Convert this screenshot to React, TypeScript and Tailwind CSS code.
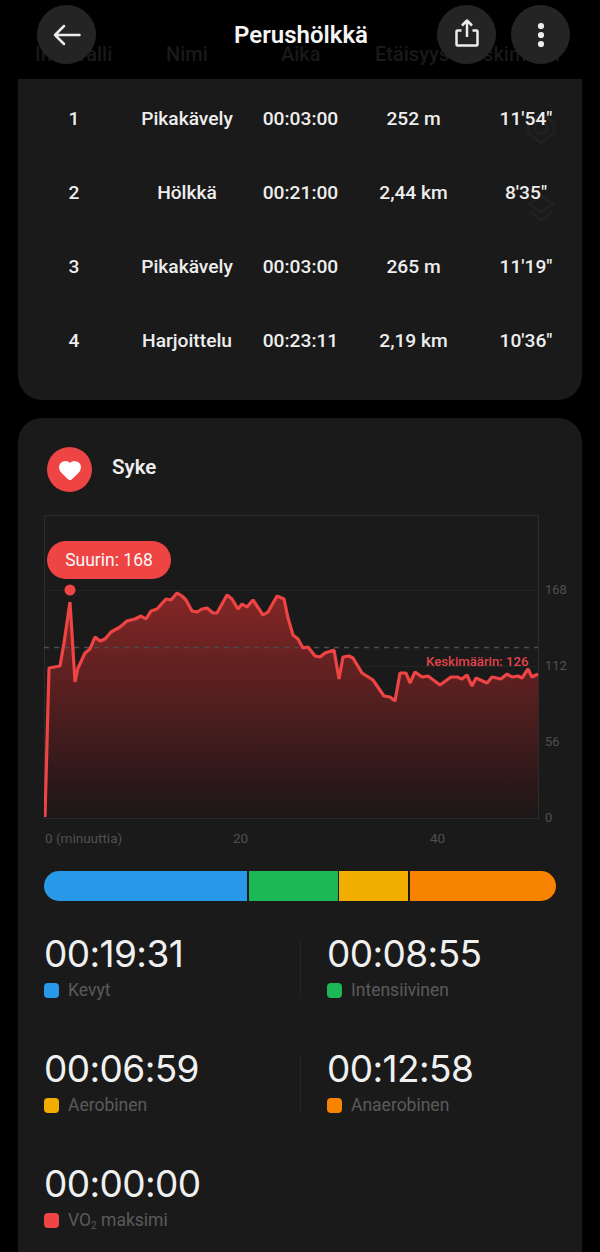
import React from 'react';
import { Heart } from 'lucide-react';

const rows = [
  { n: '1', name: 'Pikakävely', time: '00:03:00', dist: '252 m', pace: `11'54"` },
  { n: '2', name: 'Hölkkä', time: '00:21:00', dist: '2,44 km', pace: `8'35"` },
  { n: '3', name: 'Pikakävely', time: '00:03:00', dist: '265 m', pace: `11'19"` },
  { n: '4', name: 'Harjoittelu', time: '00:23:11', dist: '2,19 km', pace: `10'36"` },
];

// heart rate trace, x/y read off the screenshot relative to the plot box (494 x 303)
const trace: [number, number][] = [
  [1, 302], [5, 153], [16, 151], [20, 128], [26, 87], [31, 167], [34, 153], [41, 138], [46, 134], [51, 122],
  [56, 126], [61, 124], [67, 117], [76, 112], [83, 106], [91, 104], [97, 101], [102, 104], [107, 96], [113, 94],
  [122, 84], [127, 85], [133, 78], [138, 81], [142, 85], [148, 96], [153, 97], [158, 94], [163, 93], [169, 98],
  [173, 98], [183, 80], [188, 84], [194, 94], [198, 89], [203, 92], [209, 85], [219, 100], [224, 97], [233, 81],
  [240, 84], [244, 103], [249, 120], [254, 124], [259, 133], [264, 132], [271, 141], [276, 142], [281, 138],
  [290, 135], [295, 164], [299, 142], [305, 141], [309, 143], [318, 158], [329, 165], [340, 181], [346, 182],
  [351, 186], [356, 158], [362, 158], [366, 168], [371, 157], [378, 162], [384, 161], [396, 170], [407, 162],
  [413, 162], [418, 164], [423, 160], [428, 171], [432, 163], [443, 168], [448, 162], [457, 164], [463, 159],
  [468, 162], [474, 161], [478, 163], [484, 154], [488, 162], [494, 159],
];

const linePoints = trace.map(([x, y]) => `${x},${y}`).join(' ');
const areaPoints = `${linePoints} 494,303 1,303`;

const zones = [
  { time: '00:19:31', label: 'Kevyt', color: 'bg-[#2899e8]' },
  { time: '00:08:55', label: 'Intensiivinen', color: 'bg-[#1cb858]' },
  { time: '00:06:59', label: 'Aerobinen', color: 'bg-[#f2ae00]' },
  { time: '00:12:58', label: 'Anaerobinen', color: 'bg-[#f88300]' },
];

const RoundButton: React.FC<{ children: React.ReactNode }> = ({ children }) => (
  <div className="flex h-[59px] w-[59px] items-center justify-center rounded-full bg-[#242424]">{children}</div>
);

const BackIcon = () => (
  <svg width="28" height="22" viewBox="0 0 28 22" fill="none" stroke="#ececec" strokeWidth="2.5" strokeLinecap="round" strokeLinejoin="round">
    <path d="M26.5 11H2M11 2L2 11L11 20" />
  </svg>
);

const ShareIcon = () => (
  <svg className="mb-[4px]" width="24" height="28" viewBox="0 0 24 28" fill="none" stroke="#ececec" strokeWidth="2.5" strokeLinejoin="round">
    <path d="M6.5 11.5H2.5A1 1 0 0 0 1.5 12.5V25.5A1 1 0 0 0 2.5 26.5H21.5A1 1 0 0 0 22.5 25.5V12.5A1 1 0 0 0 21.5 11.5H17.5" />
    <path d="M12 18V2M7 6.5L12 1.5L17 6.5" />
  </svg>
);

const DotsIcon = () => (
  <svg width="8" height="26" viewBox="0 0 8 26" fill="#ececec">
    <circle cx="4" cy="4" r="3.1" />
    <circle cx="4" cy="13" r="3.1" />
    <circle cx="4" cy="22" r="3.1" />
  </svg>
);

const ZoneCell: React.FC<{ time: string; label: React.ReactNode; color: string }> = ({ time, label, color }) => (
  <div>
    <div className="font-['Inter',sans-serif] text-[37px] leading-[28px] font-normal tracking-[-0.6px] text-[#f0f0f0]">{time}</div>
    <div className="mt-[15px] flex h-[15px] items-center gap-[9px]">
      <span className={`h-[15px] w-[15px] rounded-[4px] ${color}`} />
      <span className="text-[17.5px] leading-[15px] text-[#5a5a5a]">{label}</span>
    </div>
  </div>
);

const App: React.FC = () => {
  return (
    <div className="relative h-[1252px] w-[600px] overflow-hidden bg-black font-['Roboto',sans-serif] text-white">
      {/* top bar lies over the scrolled table header */}
      <div className="absolute top-[5px] left-[37px] z-10 flex w-[533px] items-center justify-between">
        <RoundButton>
          <BackIcon />
        </RoundButton>
        <div className="absolute left-[197px] text-[24px] leading-[24px] font-semibold text-[#f5f5f5]">Perushölkkä</div>
        <div className="flex gap-[15px]">
          <RoundButton>
            <ShareIcon />
          </RoundButton>
          <RoundButton>
            <DotsIcon />
          </RoundButton>
        </div>
      </div>

      {/* table header, almost hidden behind the bar */}
      <div className="flex h-[79px] items-end pb-[17px] pl-[35px] text-[20px] leading-[16px] font-medium whitespace-nowrap text-[#191919]">
        <span className="w-[131px]">Intervalli</span>
        <span className="w-[115px]">Nimi</span>
        <span className="w-[94px]">Aika</span>
        <span className="w-[85px]">Etäisyys</span>
        <span>Keskimääri</span>
      </div>

      <div className="relative mx-[18px] h-[321px] rounded-b-[24px] bg-[#1a1a1a] pt-[3px]">
        {/* faint tab icons showing through */}
        <svg className="absolute top-[32px] left-[507px]" width="32" height="34" viewBox="0 0 32 34" fill="none" stroke="#212121" strokeWidth="2.5">
          <path d="M16 2L29 12V22L16 32L3 22V12Z" />
          <circle cx="16" cy="17" r="6" />
        </svg>
        <svg className="absolute top-[115px] left-[509px]" width="28" height="28" viewBox="0 0 28 28" fill="none" stroke="#212121" strokeWidth="2.5">
          <path d="M2 10L14 2L26 10L14 18Z" />
          <path d="M2 17L14 26L26 17" />
        </svg>
        {rows.map((r) => (
          <div key={r.n} className="relative grid h-[74px] grid-cols-[112px_114px_113px_113px_1fr] items-center text-center text-[19.2px] font-medium text-[#eeeeee]">
            <span>{r.n}</span>
            <span className="whitespace-nowrap">{r.name}</span>
            <span>{r.time}</span>
            <span>{r.dist}</span>
            <span>{r.pace}</span>
          </div>
        ))}
      </div>

      <div className="mx-[18px] mt-[18px] rounded-[24px] bg-[#1a1a1a] pt-[29px] pl-[26px]">
        <div className="flex items-center gap-[20px] pl-[3px]">
          <div className="flex h-[45px] w-[45px] items-center justify-center rounded-full bg-[#ef4444]">
            <Heart size={24} fill="#ffffff" color="#ffffff" />
          </div>
          <div className="mb-[5px] text-[20.5px] font-semibold text-[#eeeeee]">Syke</div>
        </div>

        {/* chart */}
        <div className="relative mt-[23px] h-[304px] w-[536px]">
          <svg className="absolute top-0 left-0" width="495" height="304" viewBox="0 0 495 304">
            <defs>
              <linearGradient id="hr" x1="0" y1="0" x2="0" y2="1">
                <stop offset="0" stopColor="#852626" />
                <stop offset="1" stopColor="#1c1617" />
              </linearGradient>
            </defs>
            <path d="M0.5 303.5V0.5H494.5V303.5Z" fill="none" stroke="#2c2c2c" />
            <path d="M0 75.5H494M0 151.5H494M0 227.5H494" stroke="#242424" />
            <polygon points={areaPoints} fill="url(#hr)" />
            <path d="M0 132.5H494" stroke="#4c4c4c" strokeWidth="1.5" strokeDasharray="5 5" />
            <polyline points={linePoints} fill="none" stroke="#ef4444" strokeWidth="3.2" strokeLinejoin="bevel" />
            <circle cx="26" cy="75" r="5.5" fill="#ef4444" />
          </svg>

          <div className="absolute top-[26px] left-[3px] flex h-[38px] w-[124px] items-center justify-center rounded-full bg-[#ef4444] text-[17.5px] text-[#f6f6f6]">
            Suurin: 168
          </div>
          <div className="absolute top-[139px] left-[382px] text-[13.2px] leading-[16px] font-medium whitespace-nowrap text-[#e0444a]">
            Keskimäärin: 126
          </div>
          <div className="absolute top-0 left-[501px] flex h-full w-[32px] flex-col text-[13px] leading-[16px] text-[#505050]">
            <span className="mt-[67px]">168</span>
            <span className="mt-[60px]">112</span>
            <span className="mt-[60px]">56</span>
            <span className="mt-[60px]">0</span>
          </div>
        </div>

        <div className="mt-[9px] flex h-[20px] items-center text-[13.5px] text-[#505050]">
          <span className="w-[189px] pl-px">0 (minuuttia)</span>
          <span className="w-[197px]">20</span>
          <span>40</span>
        </div>

        {/* zone bar */}
        <div className="mt-[23px] flex h-[30px] w-[512px] gap-[1.5px] overflow-hidden rounded-full">
          <div className="w-[203px] bg-[#2899e8]" />
          <div className="w-[89px] bg-[#1cb858]" />
          <div className="w-[69px] bg-[#f2ae00]" />
          <div className="flex-1 bg-[#f88300]" />
        </div>

        <div className="mt-[39px] grid w-[512px] grid-cols-[256px_1fr] gap-y-[57px]">
          {zones.map((z, i) => (
            <div key={z.label} className={i % 2 === 1 ? 'border-l border-[#242424] pl-[26px]' : ''}>
              <ZoneCell time={z.time} label={z.label} color={z.color} />
            </div>
          ))}
          <ZoneCell
            time="00:00:00"
            color="bg-[#ef4444]"
            label={
              <>
                VO<sub className="text-[10px]">2</sub> maksimi
              </>
            }
          />
        </div>
        <div className="h-[60px]" />
      </div>
    </div>
  );
};

export default App;
